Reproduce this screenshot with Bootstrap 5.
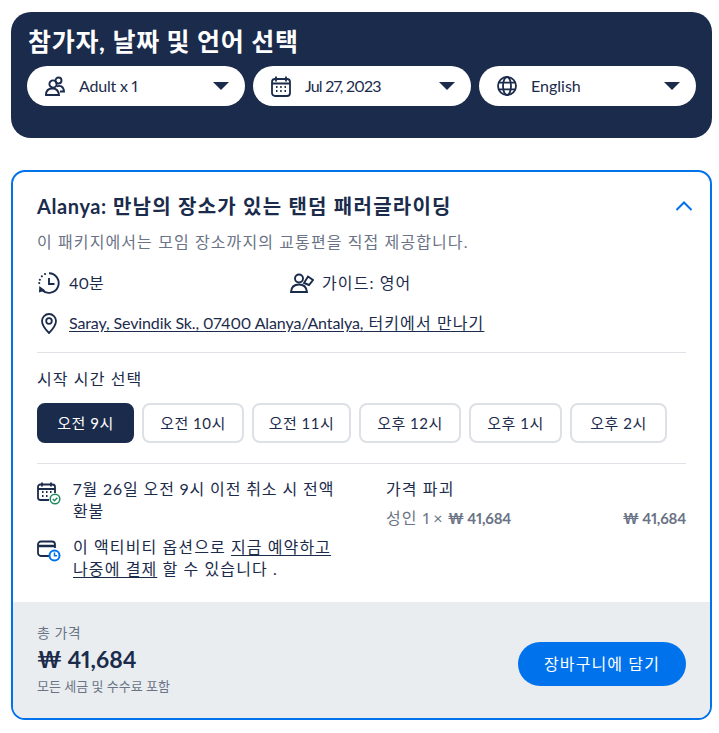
<!DOCTYPE html>
<html lang="ko">
<head>
  <meta charset="UTF-8" />
  <meta name="viewport" content="width=device-width, initial-scale=1.0"/>
  <title>참가자, 날짜 및 언어 선택</title>
  <link href="https://cdn.jsdelivr.net/npm/bootstrap@5.3.3/dist/css/bootstrap.min.css" rel="stylesheet">
  <style>
    body { font-family: Lato, "Noto Sans CJK KR", sans-serif; font-variant-numeric: proportional-nums; color: #1b2b4b; background: #fff; padding: 12px 7px 0 11px; letter-spacing: 1.1px; font-size: 16px; }
    svg { display: block; flex: none; }
    a { color: #1b2b4b; text-underline-offset: 2px; }
    .lat { letter-spacing: -.12px; }
    .num { letter-spacing: 0; }
    .picker-panel { background: #1b2b4b; border-radius: 20px; height: 126px; padding: 12px 16px 0; margin-bottom: 32px; }
    .picker-title { color: #fff; font-size: 25px; line-height: 34px; font-weight: 700; letter-spacing: .7px; margin: 0 0 8px 1px; }
    .picker-pill { flex: 0 0 218px; height: 40px; background: #fff; border-radius: 20px; padding: 0 16px 0 18px; letter-spacing: 0; }
    .picker-pill:last-child { flex-basis: 217px; }
    .picker-pill span { margin-left: 14px; }
    .picker-pill .pill-adult { letter-spacing: -.2px; }
    .picker-pill .pill-date { letter-spacing: -.8px; }
    .picker-caret { margin-left: auto; width: 0; height: 0; border-left: 8px solid transparent; border-right: 8px solid transparent; border-top: 8px solid #1b2b4b; }
    .option-box { border: 2px solid #0073ec; border-radius: 14px; height: 550px; overflow: hidden; }
    .option-body { height: 430px; padding: 19px 24px 0; }
    .option-title { font-size: 20px; line-height: 30px; font-weight: 700; letter-spacing: 1.25px; margin: 0; }
    .option-title span { letter-spacing: .6px; }
    .chevron-up { margin-right: -7px; }
    .option-sub { line-height: 22px; color: #6b7486; margin: 10px 0 0; }
    .info-row { margin-top: 18px; height: 24px; line-height: 22px; }
    .info-cell { width: 253px; }
    .place-row { margin-top: 16px; height: 24px; line-height: 22px; }
    .thin-rule { border: 0; border-top: 1px solid #dfe2e6; opacity: 1; margin: 0; }
    .first-rule { margin-top: 17px; }
    .time-label { line-height: 22px; margin: 15px 0 13px; }
    .time-btn { height: 40px; border: 2px solid #dde0e5; border-radius: 8px; background: #fff; color: #1b2b4b; font-size: 15px; letter-spacing: .5px; padding: 0; }
    .time-btn.picked { background: #1b2b4b; border-color: #1b2b4b; color: #fff; }
    .w97 { width: 97px; } .w102 { width: 102px; } .w99 { width: 99px; } .w93 { width: 93px; }
    .note-area { margin-top: 14px; }
    .note-col { width: 349px; }
    .note-item { gap: 12px; }
    .note-item + .note-item { margin-top: 14px; }
    .note-text { width: 262px; line-height: 22px; word-break: keep-all; }
    .note-tight { letter-spacing: .9px; }
    .price-head { line-height: 22px; }
    .price-line { line-height: 22px; color: #6b7486; margin-top: 7px; }
    .price-line b { font-weight: 700; font-size: 15px; letter-spacing: -.2px; }
    .option-foot { height: 116px; background: #e9edf0; padding: 0 24px; }
    .foot-label { font-size: 14px; line-height: 16px; margin-bottom: 2px; letter-spacing: .5px; color: #6b7486; }
    .foot-price { font-size: 23px; line-height: 32px; font-weight: 700; letter-spacing: 0; }
    .foot-note { font-size: 13px; line-height: 18px; letter-spacing: 0; color: #6b7486; margin-top: 2px; }
    .cart-btn { width: 168px; height: 44px; border-radius: 22px; background: #0073ec; border: 0; color: #fff; font-size: 16px; letter-spacing: 1.1px; margin-top: 8px; }
  </style>
</head>
<body>
  <div class="picker-panel">
    <h1 class="picker-title">참가자, 날짜 및 언어 선택</h1>
    <div class="d-flex gap-2">
      <div class="picker-pill d-flex align-items-center">
        <svg width="20" height="20" viewBox="0 0 20 20" fill="none" stroke="#1b2b4b" stroke-width="1.900"><circle cx="8" cy="8" r="3.600"/><circle cx="13.500" cy="4.500" r="3"/><path d="M1 19c0-4.500 3-6.500 6.500-6.500S13.500 14.500 14 19z"/><path d="M11.500 10.500c3.500-1.500 7-.5 7.500 5h-4"/></svg>
        <span class="pill-adult">Adult x 1</span>
        <i class="picker-caret"></i>
      </div>
      <div class="picker-pill d-flex align-items-center">
        <svg width="20" height="21" viewBox="0 0 20 21" fill="none" stroke="#1b2b4b" stroke-width="1.800"><rect x="1" y="3" width="18" height="17" rx="3"/><path d="M5 .5v5M15 .5v5M1 7.500h18"/><path d="M5 11h1.500M9.200 11h1.500M13.500 11h1.500M5 15h1.500M9.200 15h1.500M13.500 15h1.500"/></svg>
        <span class="pill-date">Jul 27, 2023</span>
        <i class="picker-caret"></i>
      </div>
      <div class="picker-pill d-flex align-items-center">
        <svg width="20" height="20" viewBox="0 0 20 20" fill="none" stroke="#1b2b4b" stroke-width="1.800"><circle cx="10" cy="10" r="9"/><ellipse cx="10" cy="10" rx="4" ry="9"/><path d="M1.800 6.700h16.400M1.800 13.300h16.400"/></svg>
        <span>English</span>
        <i class="picker-caret"></i>
      </div>
    </div>
  </div>

  <div class="option-box">
    <div class="option-body">
      <div class="d-flex justify-content-between align-items-center">
        <h2 class="option-title"><span>Alanya:</span> 만남의 장소가 있는 탠덤 패러글라이딩</h2>
        <svg class="chevron-up" width="18" height="10" viewBox="0 0 18 10" fill="none" stroke="#0073ec" stroke-width="2"><path d="M1.500 9 9 1.500 16.500 9"/></svg>
      </div>
      <p class="option-sub">이 패키지에서는 모임 장소까지의 교통편을 직접 제공합니다.</p>

      <div class="info-row d-flex align-items-center">
        <div class="info-cell d-flex align-items-center">
          <svg class="me-2" width="24" height="22" viewBox="0 0 24 22" fill="none" stroke="#1b2b4b" stroke-width="1.900"><path d="M12 1.200a9.800 9.800 0 1 1-7 16.800"/><path d="M2 20.500l.3-6.500 6 4.500z" fill="#1b2b4b" stroke="none"/><path d="M12 6v6h5.500"/><path d="M8 2l.1.100M4.800 4.300l.1.100M2.800 7.700l.1.100M2.200 11l.1.100" stroke-linecap="round" stroke-width="2"/></svg>
          <span><span class="num">40</span>분</span>
        </div>
        <div class="d-flex align-items-center gap-2">
          <svg width="24" height="20" viewBox="0 0 24 20" fill="none" stroke="#1b2b4b" stroke-width="1.900"><circle cx="9" cy="5.500" r="4"/><path d="M1 19c.3-5 3.500-7.500 8-7.500s7.500 2.500 8 7.500z"/><path d="M14 10l4-6.500 5 3.500-4 5z"/></svg>
          <span>가이드: 영어</span>
        </div>
      </div>

      <div class="place-row d-flex align-items-center gap-2">
        <svg class="ms-1" width="16" height="21" viewBox="0 0 16 21" fill="none" stroke="#1b2b4b" stroke-width="1.800"><path d="M8 20C4 16 1 12.500 1 8a7 7 0 0 1 14 0c0 4.500-3 8-7 12z"/><circle cx="8" cy="8" r="2.800"/></svg>
        <a class="ms-1" href="#"><span class="lat">Saray, Sevindik Sk., 07400 Alanya/Antalya,</span> 터키에서 만나기</a>
      </div>

      <hr class="thin-rule first-rule">
      <div class="time-label">시작 시간 선택</div>
      <div class="d-flex gap-2 mb-3 pb-1">
        <button class="btn time-btn picked w97">오전 9시</button>
        <button class="btn time-btn w102">오전 10시</button>
        <button class="btn time-btn w99">오전 11시</button>
        <button class="btn time-btn w102">오후 12시</button>
        <button class="btn time-btn w93">오후 1시</button>
        <button class="btn time-btn w97">오후 2시</button>
      </div>
      <hr class="thin-rule">

      <div class="d-flex note-area">
        <div class="note-col">
          <div class="d-flex note-item">
            <svg class="mt-1" width="24" height="23" viewBox="0 0 24 23" fill="none" stroke="#1b2b4b" stroke-width="1.800"><path d="M12 18H3.500A2.500 2.500 0 0 1 1 15.500V5a2.500 2.500 0 0 1 2.500-2.500h12A2.500 2.500 0 0 1 18 5v6"/><path d="M5 .5v4M14 .5v4M1 7h17"/><path d="M5 10h1.500M9 10h1.500M13 10h1.500M5 14h1.500M9 14h1.500"/><circle cx="18" cy="17" r="4.800" stroke="#1e8a5f" stroke-width="1.500" fill="#fff"/><path d="M15.800 17l1.700 1.700 2.800-3" stroke="#1e8a5f" stroke-width="1.400"/></svg>
            <div class="note-text note-tight">7월 26일 오전 9시 이전 취소 시 전액 환불</div>
          </div>
          <div class="d-flex note-item">
            <svg class="mt-1" width="24" height="22" viewBox="0 0 24 22" fill="none" stroke="#1b2b4b" stroke-width="1.800"><path d="M12 16H4a3 3 0 0 1-3-3V4.500a3 3 0 0 1 3-3h11a3 3 0 0 1 3 3V8"/><path d="M1 6h17" stroke-width="2.500"/><circle cx="17.500" cy="15.500" r="5" stroke="#0073ec" stroke-width="2" fill="#fff"/><path d="M17.500 12.500v3.300h2.500" stroke="#0073ec" stroke-width="1.500"/></svg>
            <div class="note-text">이 액티비티 옵션으로 <a href="#">지금 예약하고</a> <a href="#">나중에 결제</a> 할 수 있습니다 .</div>
          </div>
        </div>
        <div class="flex-grow-1">
          <div class="price-head">가격 파괴</div>
          <div class="price-line d-flex justify-content-between">
            <span>성인 <span class="num">1 ×</span> <b>₩ 41,684</b></span>
            <b>₩ 41,684</b>
          </div>
        </div>
      </div>
    </div>

    <div class="option-foot d-flex justify-content-between align-items-center">
      <div>
        <div class="foot-label">총 가격</div>
        <div class="foot-price">₩ 41,684</div>
        <div class="foot-note">모든 세금 및 수수료 포함</div>
      </div>
      <button class="btn cart-btn">장바구니에 담기</button>
    </div>
  </div>
</body>
</html>
